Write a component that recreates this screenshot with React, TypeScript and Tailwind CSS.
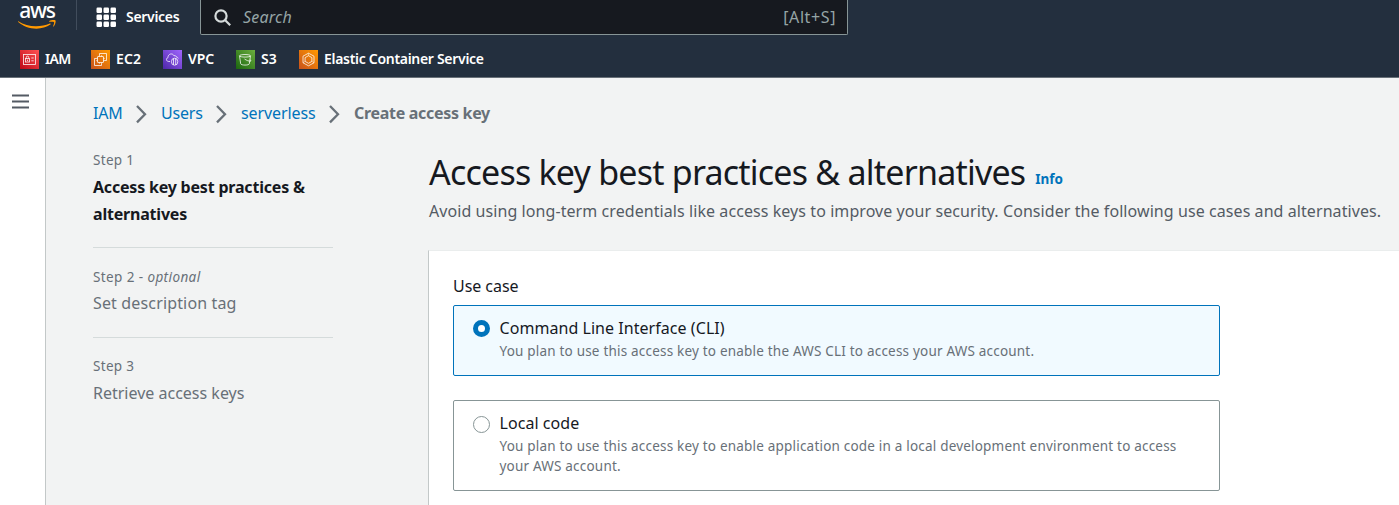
import React from "react";

type Service = { name: string; from: string; to: string; width: string; icon: React.ReactNode };

const services: Service[] = [
  {
    name: "IAM",
    from: "#BD0816",
    to: "#FF5252",
    width: "w-[24px] tracking-[-0.7px]",
    icon: (
      <>
        <rect x="3.5" y="4.5" width="12" height="10" />
        <rect x="5.5" y="8.5" width="4" height="3.5" />
        <path d="M6.3 8.5V7.3a1.2 1.2 0 0 1 2.4 0v1.2M7.5 9.6v1.4M11.3 8h2.4M11.3 10.8h2.4" />
      </>
    ),
  },
  {
    name: "EC2",
    from: "#C8511B",
    to: "#FF9900",
    width: "w-[25px] tracking-[0.1px]",
    icon: (
      <>
        <path d="M8.5 5.500V3.500H15.500V10.500H13.500M5.500 8.500H3.500V15.500H10.500V13.500" />
        <rect x="6.500" y="6.500" width="6" height="6" rx="0.500" />
        <path d="M8.4 5.3v1.200M10.600 5.300v1.200M8.400 12.500v1.200M10.600 12.500v1.200M5.300 8.400h1.200M5.300 10.600h1.200M12.500 8.400h1.200M12.500 10.600h1.200" />
      </>
    ),
  },
  {
    name: "VPC",
    from: "#4D27A8",
    to: "#A166FF",
    width: "w-[26px] tracking-[-0.1px]",
    icon: (
      <>
        <path d="M7 11.500H5.800C3 11.500 2.800 8.300 5 7.600 4.800 3.800 9.600 2.600 11 5.800c1.300-.600 2.200.200 2.300 1.200 1.100.100 1.700.600 2 1.500" />
        <ellipse cx="11.600" cy="11.700" rx="3.200" ry="3.500" />
        <path d="M10.500 8.500v6.400M12.700 8.500v6.400" />
      </>
    ),
  },
  {
    name: "S3",
    from: "#1B660F",
    to: "#6CAE3E",
    width: "w-[16px]",
    icon: (
      <>
        <path d="M3.500 5.800c0-1.700 11-1.700 11 0s-11 1.700-11 0Z" />
        <path d="M3.500 5.800 4.700 13.800c.4 1.700 8.200 1.700 8.600 0L14.500 5.800M8.500 9c2 1.400 4.300 2.200 6 2.200.8 0 .6-.9-.400-1.500" />
      </>
    ),
  },
  {
    name: "Elastic Container Service",
    from: "#C8511B",
    to: "#FF9900",
    width: "w-[162px] tracking-[-0.3px]",
    icon: (
      <>
        <path d="M9.500 3.200 15 6.200v6.600L9.500 15.800 4 12.800V6.200Z" />
        <path d="M9.500 5.700 12.900 7.600v3.800L9.500 13.300 6.100 11.400V7.600Z" />
        <path d="M9.500 3.200v2.500M15 12.800l-2.100-1.400M4 12.800l2.100-1.400" strokeWidth="0.500" />
      </>
    ),
  },
];

function ServiceIcon({ service }: { service: Service }) {
  const id = "g-" + service.name.replace(/ /g, "");
  return (
    <svg width="19" height="19" viewBox="0 0 19 19" className="shrink-0">
      <defs>
        <linearGradient id={id} x1="0" y1="1" x2="1" y2="0">
          <stop offset="0" stopColor={service.from} />
          <stop offset="1" stopColor={service.to} />
        </linearGradient>
      </defs>
      <rect width="19" height="19" fill={`url(#${id})`} />
      <g fill="none" stroke="#fff" strokeWidth="0.85" strokeOpacity="0.9">{service.icon}</g>
    </svg>
  );
}

function AwsLogo() {
  return (
    <div className="flex w-[38px] flex-col items-center">
      <span className="h-[15.5px] text-[21px] leading-[13px] font-medium tracking-[-1.2px] text-white">aws</span>
      <svg width="38" height="9" viewBox="0 0 38 9">
        <path d="M.3 1.3C5.5 4.6 11.5 6.300 18 6.300c5 0 9.600-1 13.800-2.700.8-.3 1.300.5.600 1C28.600 7.300 23.600 8.700 18.500 8.700 11.500 8.700 5 6.200.2 2c-.4-.4-.2-.9.1-.7Z" fill="#f90" />
        <path d="M31.200 1.100c2-1.300 5.700-1.200 6.300-.6.500.7-.2 4.600-2 6.100-.300.200-.6.100-.5-.200.5-1.100 1.500-3.500 1-4.200-.5-.600-3-.3-4.500-.4-.4-.1-.5-.4-.3-.7Z" fill="#f90" />
      </svg>
    </div>
  );
}

function Header() {
  return (
    <header className="h-[78px] border-b border-[#687078] bg-[#232f3e] text-[14px] font-semibold text-white">
      <div className="flex h-[35px] items-start">
        <div className="flex h-[30px] w-[77px] items-start border-r border-[#414d5c] pt-[4px] pl-[18px]">
          <AwsLogo />
        </div>
        <div className="flex h-[34px] w-[123px] items-center pl-[19px]">
          <svg width="21" height="21" viewBox="0 0 21 21" fill="#fff" className="shrink-0">
            {[0.5, 7.5, 14.5].map((y) =>
              [0.5, 7.5, 14.5].map((x) => <rect key={`${x}-${y}`} x={x} y={y} width="5.5" height="5.5" rx="1.2" />),
            )}
          </svg>
          <span className="-mt-[1px] ml-[9px] tracking-[-0.3px]">Services</span>
        </div>
        <div className="flex h-[35px] w-[648px] items-center rounded-b-[2px] border border-t-0 border-[#879596] bg-[#16191f] pr-[11px] pl-[13px] text-[16px] font-normal text-[#95a5a6]">
          <svg width="17" height="17" viewBox="0 0 17 17" fill="none" stroke="#d5dbdb" strokeWidth="2.2" className="shrink-0">
            <circle cx="7" cy="7" r="5.6" />
            <path d="M11 11l5.2 5.2" />
          </svg>
          <span className="ml-[12px] grow tracking-[0.2px] italic">Search</span>
          <span className="tracking-[0.6px]">[Alt+S]</span>
        </div>
      </div>
      <nav className="flex h-[42px] items-center gap-[22px] pt-[6px] pl-[20px]">
        {services.map((s) => (
          <a key={s.name} className="flex items-center gap-[6px] whitespace-nowrap">
            <ServiceIcon service={s} />
            <span className={`-mt-[2px] ${s.width}`}>{s.name}</span>
          </a>
        ))}
      </nav>
    </header>
  );
}

function Chevron() {
  return (
    <svg width="12" height="20" viewBox="0 0 12 20" fill="none" stroke="#687078" strokeWidth="2.3" className="mt-[2px] shrink-0">
      <path d="M1 2 9 10.2 1 18.4" />
    </svg>
  );
}

function Breadcrumbs() {
  return (
    <nav className="flex h-[22px] items-center text-[16px] whitespace-nowrap text-[#0073bb]">
      <a className="w-[43px] tracking-[-0.2px]">IAM</a>
      <Chevron />
      <a className="ml-[13px] w-[55px] tracking-[-0.2px]">Users</a>
      <Chevron />
      <a className="ml-[13px] w-[88px] tracking-[-0.1px]">serverless</a>
      <Chevron />
      <span className="ml-[13px] font-bold tracking-[-0.3px] text-[#687078]">Create access key</span>
    </nav>
  );
}

function Steps() {
  return (
    <ol className="w-[240px] text-[16px] leading-[27px] whitespace-nowrap text-[#687078]">
      <li className="h-[98px] border-b border-[#d5dbdb]">
        <div className="h-[24px] text-[13.5px] leading-[20px] tracking-[0.3px]">Step 1</div>
        <div className="font-bold tracking-[-0.2px] text-[#16191f]">
          Access key best practices &amp;
          <br />
          alternatives
        </div>
      </li>
      <li className="h-[90px] border-b border-[#d5dbdb] pt-[19px]">
        <div className="h-[23px] text-[13.5px] leading-[20px] tracking-[0.4px]">
          Step 2 - <i>optional</i>
        </div>
        <div className="tracking-[0.15px]">Set description tag</div>
      </li>
      <li className="pt-[18px]">
        <div className="h-[24px] text-[13.5px] leading-[20px] tracking-[0.3px]">Step 3</div>
        <div>Retrieve access keys</div>
      </li>
    </ol>
  );
}

function Radio({ checked }: { checked: boolean }) {
  return checked ? (
    <span className="mt-[14px] size-[17px] shrink-0 rounded-full border-[5px] border-[#0073bb] bg-white" />
  ) : (
    <span className="mt-[15px] size-[17px] shrink-0 rounded-full border border-[#879596] bg-white" />
  );
}

function Main() {
  return (
    <main className="ml-[95px] w-[971px] shrink-0 whitespace-nowrap">
      <div className="flex h-[48px] items-baseline pl-px">
        <h1 className="text-[34px] leading-[44px] tracking-[-0.78px] text-[#16191f]">Access key best practices &amp; alternatives</h1>
        <a className="-mt-[1px] ml-[10px] -translate-y-px text-[13.5px] font-bold text-[#0073bb]">Info</a>
      </div>
      <p className="h-[52px] pl-px text-[16px] leading-[26px] tracking-[0.073px] text-[#545b64]">
        Avoid using long-term credentials like access keys to improve your security. Consider the following use cases and alternatives.
      </p>
      <section className="h-[255px] border-t border-l border-t-[#eaeded] border-l-[#c3c8c8] bg-white pt-[23px] pl-[24px]">
        <h2 className="h-[31px] text-[16px] leading-[24px] tracking-[-0.05px] text-[#16191f]">Use case</h2>
        <label className="flex h-[71px] w-[767px] rounded-[2px] border border-[#0073bb] bg-[#f1faff] pl-[19px]">
          <Radio checked />
          <div className="ml-[9.5px] pt-[11px]">
            <div className="text-[16px] leading-[22px] tracking-[0.05px] text-[#16191f]">Command Line Interface (CLI)</div>
            <div className="mt-[2px] text-[13.5px] leading-[20px] tracking-[0.2px] text-[#687078]">You plan to use this access key to enable the AWS CLI to access your AWS account.</div>
          </div>
        </label>
        <label className="mt-[24px] flex h-[91px] w-[767px] rounded-[2px] border border-[#879596] bg-white pl-[19px]">
          <Radio checked={false} />
          <div className="ml-[9.5px] pt-[11px]">
            <div className="text-[16px] leading-[22px] tracking-[0.05px] text-[#16191f]">Local code</div>
            <div className="mt-[2px] text-[13.5px] leading-[20px] tracking-[0.2px] text-[#687078]">
              You plan to use this access key to enable application code in a local development environment to access
              <br />
              your AWS account.
            </div>
          </div>
        </label>
      </section>
    </main>
  );
}

export default function App() {
  return (
    <div className="h-[505px] w-full overflow-hidden bg-[#f2f3f3] font-['Noto_Sans',sans-serif]">
      <Header />
      <div className="flex h-[427px]">
        <aside className="w-[46px] shrink-0 border-r border-[#c3c8c8] bg-white pt-[16px] pl-[12px]">
          <svg width="17" height="16" viewBox="0 0 17 16" stroke="#545b64" strokeWidth="2">
            <path d="M0 1.500h17M0 7.500h17M0 13.500h17" />
          </svg>
        </aside>
        <div className="grow pt-[24px] pl-[47px]">
          <Breadcrumbs />
          <div className="flex pt-[26px]">
            <Steps />
            <Main />
          </div>
        </div>
      </div>
    </div>
  );
}
